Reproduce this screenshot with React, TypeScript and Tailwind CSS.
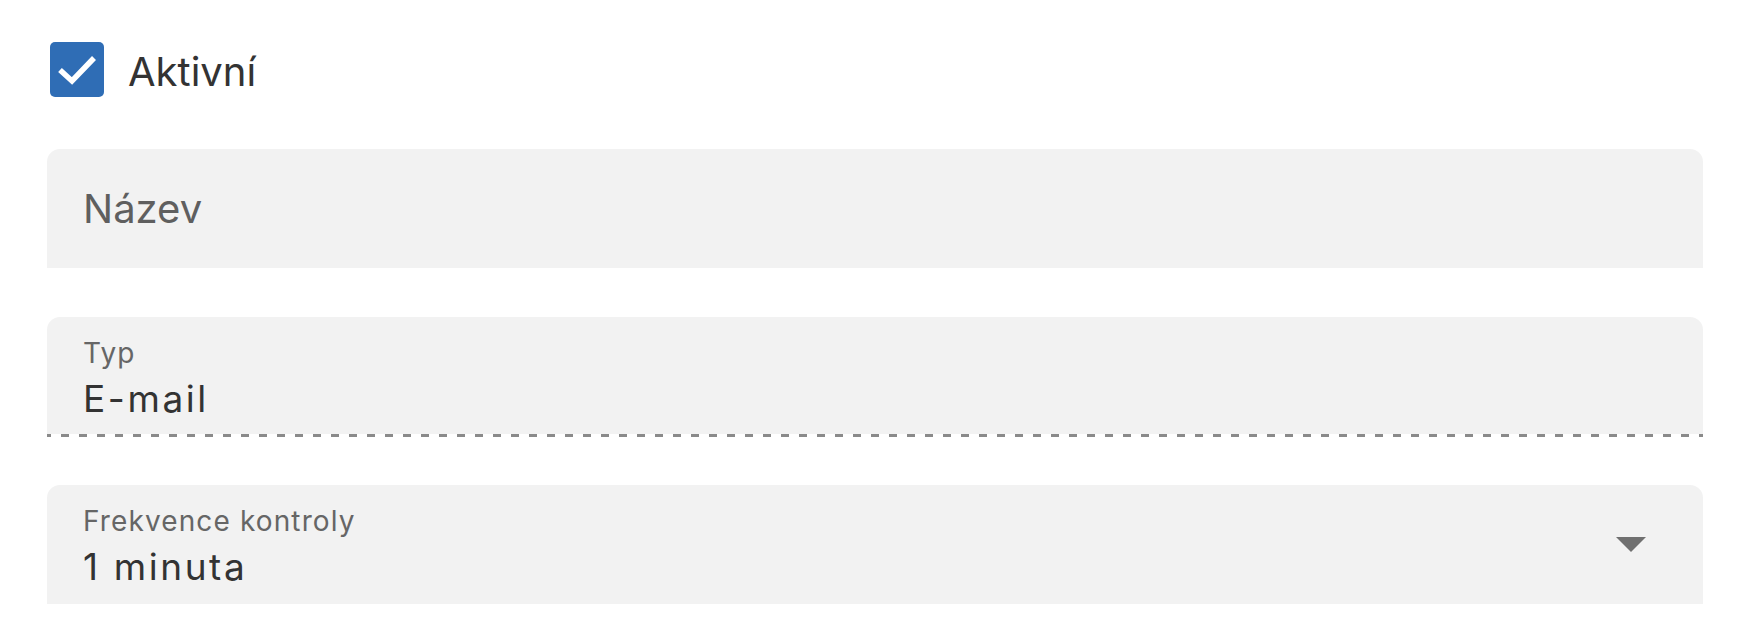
import { useState } from "react";

type Option = { value: string; label: string };

const frequencies: Option[] = [
  { value: "1", label: "1 minuta" },
  { value: "5", label: "5 minut" },
  { value: "15", label: "15 minut" },
];

const font = { fontFamily: "Inter, 'Noto Sans', sans-serif" };

const FilledField = ({ label, children, dashed }: { label: string; children: React.ReactNode; dashed?: boolean }) => (
  <div className="flex flex-col">
    <div className="flex h-[117px] flex-col rounded-t-[13px] bg-[#f2f2f2] px-[36px] pt-[22px]">
      <span className="text-[28px] leading-none tracking-[0.04em] text-[#666666]">{label}</span>
      <div className="mt-[13px]">{children}</div>
    </div>
    {dashed ? (
      <div className="h-[3px] bg-[repeating-linear-gradient(90deg,#8a8a8a_0_4px,transparent_4px_14px,#8a8a8a_14px_18px)]" />
    ) : (
      <div className="h-[2px] bg-[#f2f2f2]" />
    )}
  </div>
);

export default function App() {
  const [active, setActive] = useState(true);
  const [name, setName] = useState("");
  const [freq, setFreq] = useState("1");
  const current = frequencies.find((f) => f.value === freq);

  return (
    <div className="min-h-screen bg-white pl-[47px] pr-[40px] pt-[42px]" style={font}>
      <label className="ml-[3px] flex cursor-pointer items-center gap-[24px]">
        <button
          type="button"
          onClick={() => setActive(!active)}
          className="flex h-[55px] w-[54px] items-center justify-center rounded-[5px] bg-[#2f6db5]"
        >
          {active && (
            <svg width="40" height="30" viewBox="0 0 40 30" fill="none">
              <path d="M3 15 L15 26 L37 3" stroke="white" strokeWidth="5.5" />
            </svg>
          )}
        </button>
        <span className="mt-[5px] text-[40px] leading-none text-[#333333]">Aktivní</span>
      </label>

      <div className="mt-[52px] flex h-[119px] items-center rounded-t-[13px] bg-[#f2f2f2] px-[36px]">
        <input
          value={name}
          onChange={(e) => setName(e.target.value)}
          placeholder="Název"
          className="w-full bg-transparent text-[40px] leading-none text-[#333333] outline-none placeholder:text-[#5f5f5f]"
        />
      </div>

      <div className="mt-[49px]">
        <FilledField label="Typ" dashed>
          <span className="block text-[37px] leading-none tracking-[0.07em] text-[#333333]">E-mail</span>
        </FilledField>
      </div>

      <div className="mt-[48px]">
        <div className="relative flex h-[119px] rounded-t-[13px] bg-[#f2f2f2] pl-[36px] pr-[57px] pt-[22px]">
          <div className="flex flex-1 flex-col">
            <span className="text-[28px] leading-none tracking-[0.04em] text-[#666666]">Frekvence kontroly</span>
            <span className="mt-[13px] block text-[37px] leading-none tracking-[0.07em] text-[#333333]">
              {current?.label}
            </span>
          </div>
          <div className="flex items-center pb-[22px]">
            <svg width="30" height="15" viewBox="0 0 30 15">
              <path d="M0 0 H30 L15 15 Z" fill="#707070" />
            </svg>
          </div>
          <select
            value={freq}
            onChange={(e) => setFreq(e.target.value)}
            className="absolute inset-0 cursor-pointer opacity-0"
          >
            {frequencies.map((f) => (
              <option key={f.value} value={f.value}>
                {f.label}
              </option>
            ))}
          </select>
        </div>
      </div>
    </div>
  );
}
